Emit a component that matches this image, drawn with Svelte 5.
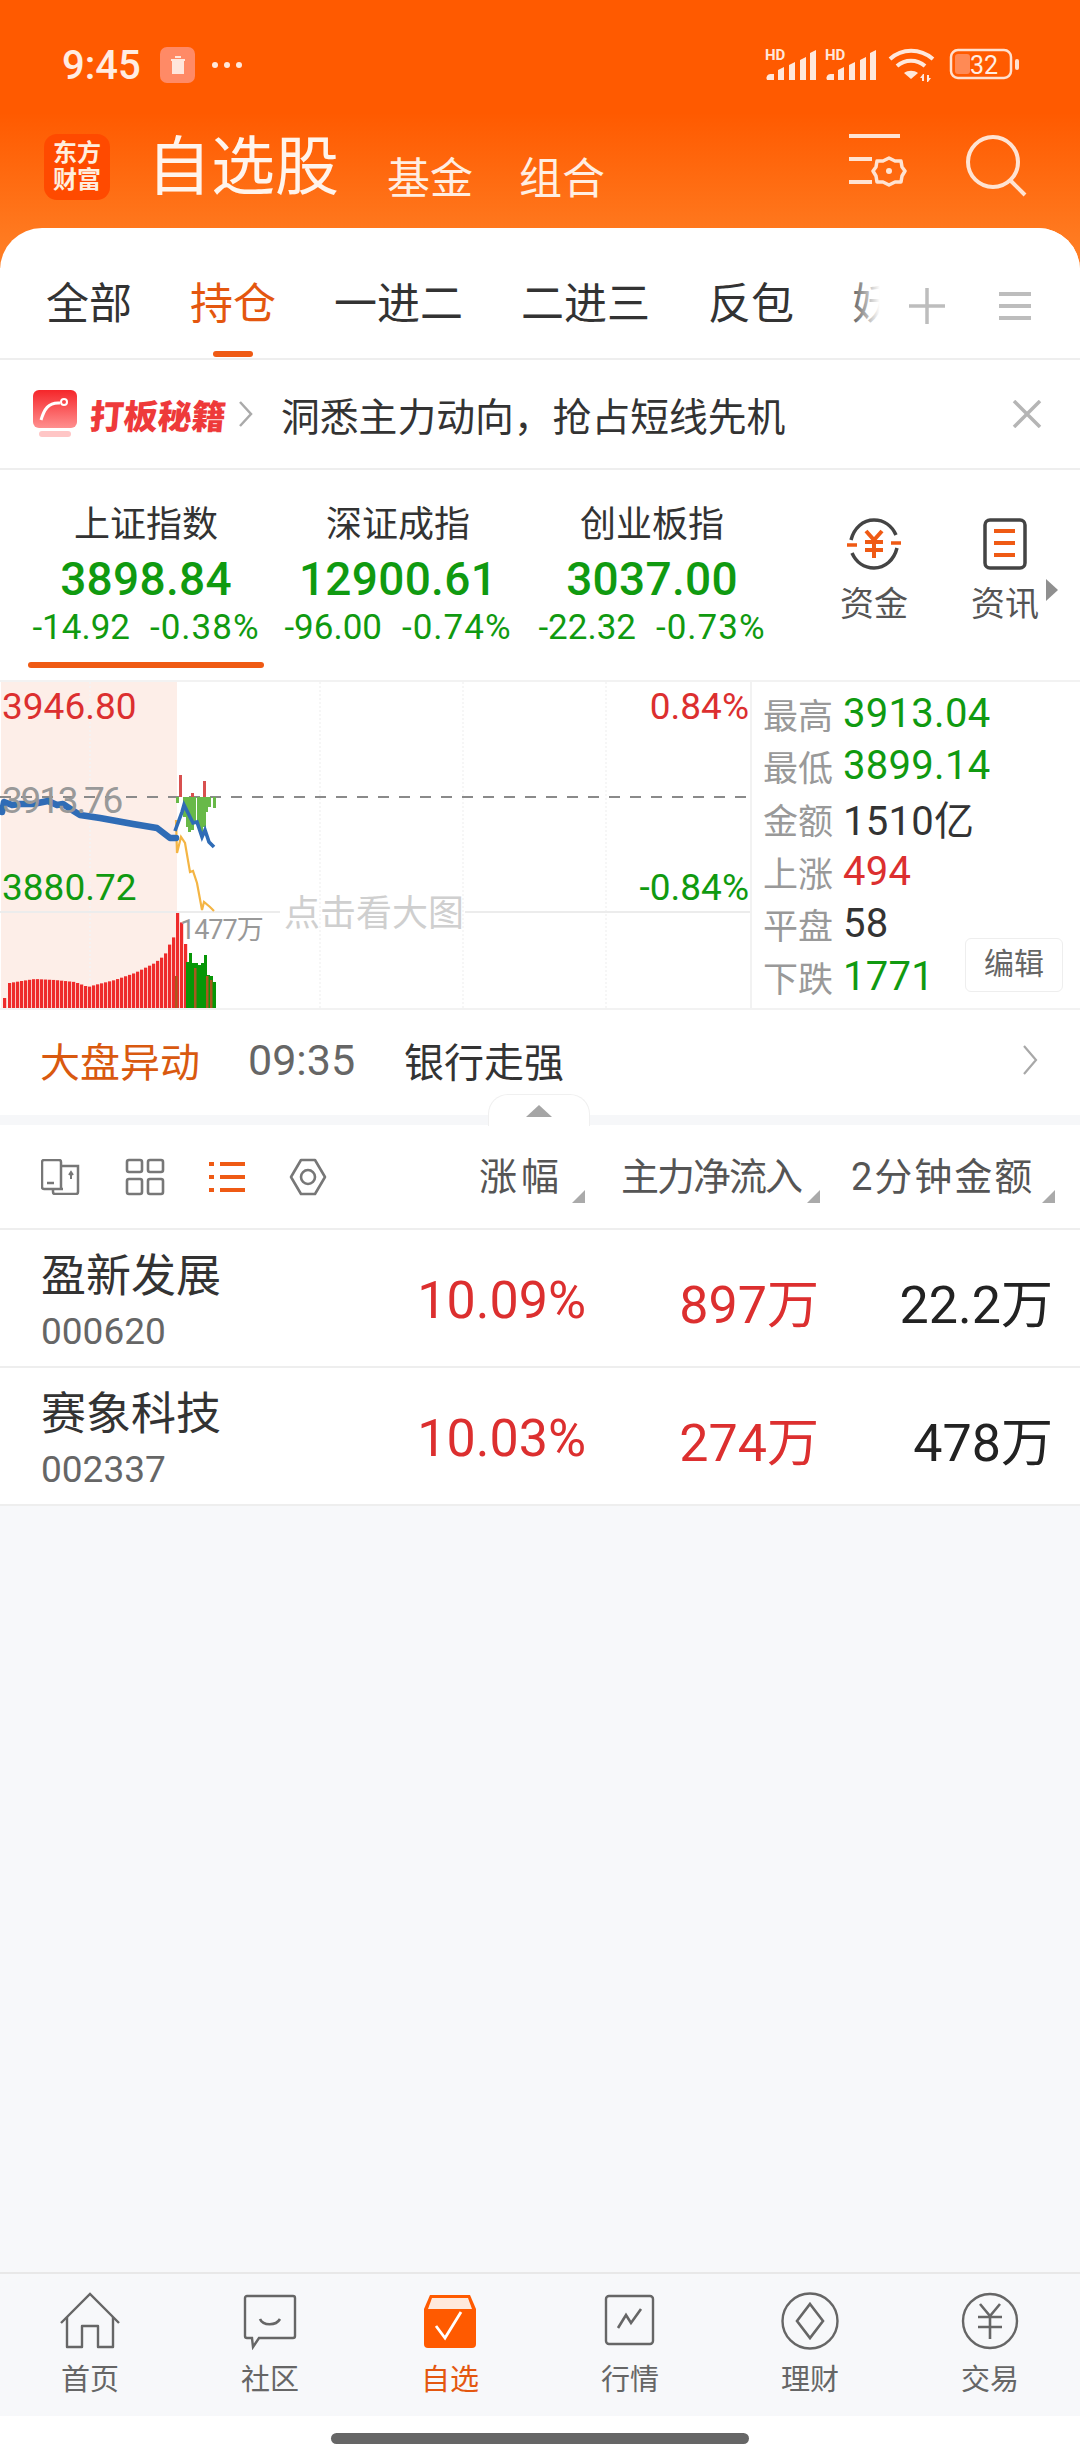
<script>
  const tabs = ['全部', '持仓', '一进二', '二进三', '反包', '妖股'];
  const indexes = [
    { name: '上证指数', value: '3898.84', change: '-14.92', pct: '-0.38%', active: true },
    { name: '深证成指', value: '12900.61', change: '-96.00', pct: '-0.74%' },
    { name: '创业板指', value: '3037.00', change: '-22.32', pct: '-0.73%' }
  ];
  const stats = [
    { label: '最高', value: '3913.04', tone: 'green' },
    { label: '最低', value: '3899.14', tone: 'green' },
    { label: '金额', value: '1510亿', tone: 'dark' },
    { label: '上涨', value: '494', tone: 'red' },
    { label: '平盘', value: '58', tone: 'dark' },
    { label: '下跌', value: '1771', tone: 'green' }
  ];
  const stocks = [
    { name: '盈新发展', code: '000620', pct: '10.09%', flow: '897万', amount: '22.2万' },
    { name: '赛象科技', code: '002337', pct: '10.03%', flow: '274万', amount: '478万' }
  ];
  const navs = ['首页', '社区', '自选', '行情', '理财', '交易'];

  // volume tops, [x, y] in chart space
  const volTop = [[8, 303], [24, 303], [60, 301], [100, 299], [160, 300], [220, 302], [260, 307], [280, 305], [340, 300], [400, 293], [460, 283], [490, 275], [500, 267], [520, 255], [528, 240], [534, 233], [548, 255], [556, 273]];
  function topAt(zx) {
    for (let i = 1; i < volTop.length; i++) {
      const [x0, y0] = volTop[i - 1];
      const [x1, y1] = volTop[i];
      if (zx <= x1) return y0 + ((y1 - y0) * (zx - x0)) / (x1 - x0);
    }
    return 300;
  }
  const redBars = [{ x: 3, y: 318 }];
  for (let x = 8; x < 185; x += 4) {
    redBars.push({ x, y: x === 176 ? 233 : topAt(x * 3) });
  }
  const greenVol = [[186, 282], [189, 273], [192, 283], [195, 283], [198, 285], [201, 283], [204, 275], [207, 295], [210, 296], [213, 302]];
  const brownVol = [[175, 296], [194, 288], [206, 296], [210, 300]];
  const flowDown = [[176, 6], [183, 20], [186, 30], [188, 35], [191, 33], [193, 25], [197, 30], [200, 35], [203, 30], [205, 15], [208, 10], [213, 11]];
</script>

<div class="page">
  <header class="top">
    <div class="status">
      <span class="time">9:45</span>
      <span class="trash">
        <svg width="20" height="22" viewBox="0 0 20 22"><path d="M3 5h14v2H16v13H4V7H3zM7 2h6v2H7z" fill="#ffe6dc"/></svg>
      </span>
      <span class="dots"><i></i><i></i><i></i></span>
      <span class="grow"></span>
      <svg class="sb" width="258" height="44" viewBox="0 -4 258 44">
        {#each [0, 60] as dx}
          <g transform="translate({dx} 0)" fill="#ffe8dc">
            <text x="0" y="12" font-size="15" font-weight="700" font-family="Roboto, sans-serif">HD</text>
            <path d="M2 32a4 4 0 0 1 4-6h3v6z"/>
            <path d="M13 32v-10l6-3v13zM24 32V17l6-3v18zM35 32V12l6-3v23zM45 32V5l6-3v30z"/>
          </g>
        {/each}
        <g fill="none" stroke="#ffe8dc" stroke-width="4">
          <path d="M125 11c12-11 30-11 43 0"/>
          <path d="M132 18c8-7 20-7 28 0"/>
        </g>
        <path d="M139 25c4-3 10-3 14 0l-7 6z" fill="#ffe8dc"/>
        <path d="M158 26l-3 4h2v3h2v-7zM163 34l3-4h-2v-3h-2v7z" fill="#ffe8dc"/>
        <rect x="186" y="2" width="60" height="28" rx="7" fill="none" stroke="#ffe0cf" stroke-width="2.5"/>
        <rect x="190" y="6" width="15" height="20" rx="3" fill="#ff8a55"/>
        <rect x="250" y="11" width="4" height="11" rx="2" fill="#ffe0cf"/>
        <text x="205" y="26" font-size="25" fill="#ffeee4" font-family="Roboto, sans-serif">32</text>
      </svg>
    </div>
    <div class="title-row">
      <div class="logo"><span>东方</span><span>财富</span></div>
      <span class="title">自选股</span>
      <span class="sub first">基金</span>
      <span class="sub second">组合</span>
      <span class="grow"></span>
      <svg class="cfg" width="60" height="68" viewBox="0 0 60 68" fill="none" stroke="#ffe3d2" stroke-width="4">
        <path d="M2 8h51M2 31h23M2 54h23"/>
        <path d="M42 30l6 3 6 0 1 6 3 4-3 5-1 6-6 0-6 3-6-3-6 0-1-6-3-5 3-4 1-6 6 0z" stroke-width="3.5" stroke-linejoin="round"/>
        <circle cx="42" cy="43" r="3" fill="#ffe3d2" stroke="none"/>
      </svg>
      <svg class="search" width="62" height="64" viewBox="0 0 62 64" fill="none" stroke="#ffe3d2" stroke-width="4">
        <circle cx="27" cy="28" r="25"/>
        <path d="M45 47l14 14"/>
      </svg>
    </div>
  </header>

  <section class="card">
    <nav class="tabs">
      {#each tabs as tab, i}
        <span class="tab" class:on={i === 1}>{tab}</span>
      {/each}
      <div class="tab-tools">
        <svg width="38" height="38" viewBox="0 0 38 38"><path d="M19 1v36M1 19h36" stroke="#bdbdbd" stroke-width="3.5"/></svg>
        <svg width="34" height="32" viewBox="0 0 34 32"><path d="M1 4h32M1 16h32M1 28h32" stroke="#bdbdbd" stroke-width="4"/></svg>
      </div>
    </nav>

    <div class="banner">
      <svg width="46" height="48" viewBox="0 0 46 48">
        <defs>
          <linearGradient id="bn" x1="0" y1="0" x2="0" y2="1">
            <stop offset="0" stop-color="#f5262a"/>
            <stop offset="1" stop-color="#ff8f8f"/>
          </linearGradient>
        </defs>
        <rect x="1" width="44" height="38" rx="6" fill="url(#bn)"/>
        <path d="M9 30c3-10 7-18 19-17" fill="none" stroke="#fff" stroke-width="3"/>
        <circle cx="32" cy="12" r="3" fill="none" stroke="#fff" stroke-width="2"/>
        <rect x="7" y="41" width="32" height="6" rx="3" fill="#ffc6c6"/>
      </svg>
      <span class="brand">打板秘籍</span>
      <svg width="15" height="28" viewBox="0 0 15 28"><path d="M2 2l11 12L2 26" fill="none" stroke="#aaa" stroke-width="2.5"/></svg>
      <span class="slogan">洞悉主力动向，抢占短线先机</span>
      <span class="grow"></span>
      <svg class="close" width="30" height="28" viewBox="0 0 30 28"><path d="M2 1l26 26M28 1L2 27" stroke="#b5b5b5" stroke-width="3.5"/></svg>
    </div>

    <div class="indexes">
      {#each indexes as item}
        <div class="idx">
          <div class="idx-name">{item.name}</div>
          <div class="idx-val">{item.value}</div>
          <div class="idx-chg"><span>{item.change}</span><span class="pct">{item.pct}</span></div>
          {#if item.active}<div class="idx-line"></div>{/if}
        </div>
      {/each}
      <div class="side">
        <div class="side-item">
          <svg width="56" height="56" viewBox="0 0 56 56" fill="none">
            <path d="M5 24C8 12 17 4 28 4c10 0 18 6 22 15M51 32c-3 12-12 20-23 20-10 0-18-6-22-15" stroke="#444" stroke-width="3.5"/>
            <path d="M1 29l10 0M45 27l10 0" stroke="#ef5a14" stroke-width="3.5"/>
            <path d="M20 15l8 9 8-9M19 26h18M19 34h18M28 24v18" stroke="#ef5a14" stroke-width="4"/>
          </svg>
          <span>资金</span>
        </div>
        <div class="side-item">
          <svg width="46" height="52" viewBox="0 0 46 52" fill="none">
            <rect x="3" y="2" width="40" height="48" rx="5" stroke="#444" stroke-width="3.5"/>
            <path d="M12 13h21M12 25h21M12 37h21" stroke="#ef5a14" stroke-width="4"/>
          </svg>
          <span>资讯</span>
        </div>
        <svg class="more" width="14" height="24" viewBox="0 0 14 24"><path d="M1 1l12 11L1 23z" fill="#8f8f8f"/></svg>
      </div>
    </div>

    <div class="market">
      <div class="chart">
        <svg class="plot" width="750" height="326" viewBox="0 2 750 326">
          <rect x="1" y="2" width="176" height="326" fill="#fdeee8"/>
          {#each [90, 320, 463, 606] as x}
            <line x1={x} x2={x} y1="2" y2="328" stroke="#f3f3f3" stroke-width="1.5" stroke-dasharray="2 2"/>
          {/each}
          <line x1="0" x2="280" y1="232" y2="232" stroke="#ececec" stroke-width="2"/>
          <line x1="465" x2="750" y1="232" y2="232" stroke="#ececec" stroke-width="2"/>
          {#each redBars as b}
            <rect x={b.x} y={b.y} width="3.2" height={328 - b.y} fill="#ee2b2b"/>
          {/each}
          {#each greenVol as [x, y]}
            <rect x={x} y={y} width="3" height={328 - y} fill="#079607"/>
          {/each}
          {#each brownVol as [x, y]}
            <rect x={x} y={y} width="2.5" height={328 - y} fill="#a9581f"/>
          {/each}
          <line x1="0" x2="750" y1="117" y2="117" stroke="#8a8a8a" stroke-width="2" stroke-dasharray="11 10"/>
          {#each flowDown as [x, d]}
            <rect x={x} y="117" width="3" height={d} fill="#68b948"/>
          {/each}
          <rect x="179" y="95" width="3" height="22" fill="#d8504f"/>
          <rect x="191" y="113" width="3" height="4" fill="#d8504f"/>
          <rect x="203" y="101" width="3" height="16" fill="#d8504f"/>
          <polyline points="176,140 177,173 181,157 185,163 190,192 193,191 197,203 202,230 204,222 210,227 214,231" fill="none" stroke="#f4b544" stroke-width="2.2"/>
          <polyline points="2,132 4,122 12,125 20,124 33,124 48,121 57,125 63,124 72,130 80,135 100,138 133,144 157,148 170,158 176,158" fill="none" stroke="#2f6cb6" stroke-width="6.5" stroke-linejoin="round" stroke-linecap="round"/>
          <polyline points="175,151 182,132 184,125 193,143 197,142 202,157 205,150 209,162 214,167" fill="none" stroke="#2f6cb6" stroke-width="3.6"/>
        </svg>
        <span class="lb red left t1">3946.80</span>
        <span class="lb gray left t2">3913.76</span>
        <span class="lb green left t3">3880.72</span>
        <span class="lb red right t1">0.84%</span>
        <span class="lb green right t3">-0.84%</span>
        <span class="vol">1477万</span>
        <span class="hint">点击看大图</span>
      </div>
      <div class="stats">
        {#each stats as s}
          <div class="stat"><span class="stat-k">{s.label}</span><span class="stat-v {s.tone}">{s.value}</span></div>
        {/each}
        <span class="edit">编辑</span>
      </div>
    </div>

    <div class="alert">
      <span class="alert-tag">大盘异动</span>
      <span class="alert-time">09:35</span>
      <span class="alert-text">银行走强</span>
      <span class="grow"></span>
      <svg width="16" height="32" viewBox="0 0 16 32"><path d="M2 2l12 14L2 30" fill="none" stroke="#a8a8a8" stroke-width="2.2"/></svg>
    </div>
  </section>

  <div class="strip">
    <div class="handle"><i></i></div>
  </div>

  <div class="tools">
    <svg width="40" height="36" viewBox="0 0 40 36" fill="none" stroke="#777" stroke-width="2.5">
      <path d="M22 30H3a2 2 0 0 1-2-2V3a2 2 0 0 1 2-2h15a2 2 0 0 1 2 2v27"/>
      <path d="M20 7h17v26a2 2 0 0 1-2 2H14a2 2 0 0 1-2-2v-3"/>
      <path d="M6 24h7"/>
      <path d="M30 14v6M28 16l2-3 2 3" stroke-width="2"/>
    </svg>
    <svg width="40" height="38" viewBox="0 0 40 38" fill="none" stroke="#777" stroke-width="2.6">
      <rect x="2" y="2" width="15" height="12" rx="2"/>
      <rect x="23" y="2" width="15" height="12" rx="2"/>
      <rect x="2" y="21" width="15" height="15" rx="2"/>
      <rect x="23" y="21" width="15" height="15" rx="2"/>
    </svg>
    <svg width="36" height="32" viewBox="0 0 36 32" stroke="#ef5a14" stroke-width="4">
      <path d="M0 3h5M0 16h5M0 29h5M11 3h25M11 16h25M11 29h25"/>
    </svg>
    <svg width="38" height="38" viewBox="0 0 38 38" fill="none" stroke="#777" stroke-width="2.6">
      <path d="M12 2h14l10 17-10 17H12L2 19z" stroke-linejoin="round"/>
      <circle cx="19" cy="19" r="7"/>
    </svg>
    <div class="cols">
      <span class="col c1">涨幅<i></i></span>
      <span class="col c2">主力净流入<i></i></span>
      <span class="col c3">2分钟金额<i></i></span>
    </div>
  </div>

  {#each stocks as s}
    <div class="row">
      <div class="stock">
        <div class="stock-name">{s.name}</div>
        <div class="stock-code">{s.code}</div>
      </div>
      <span class="num red">{s.pct}</span>
      <span class="num red">{s.flow}</span>
      <span class="num ink">{s.amount}</span>
    </div>
  {/each}

  <div class="fill"></div>

  <footer class="nav">
    {#each navs as label, i}
      <div class="nav-item" class:on={i === 2}>
        <svg width="64" height="58" viewBox="0 0 64 58" fill="none" stroke="#666" stroke-width="2.4">
          {#if i === 0}
            <path d="M3 31L32 2l29 29"/>
            <path d="M9 25v30h15V34h16v21h15V25" stroke-linejoin="round"/>
          {:else if i === 1}
            <path d="M9 4h46a2 2 0 0 1 2 2v38a2 2 0 0 1-2 2H21l-6 9-1-9H9a2 2 0 0 1-2-2V6a2 2 0 0 1 2-2z"/>
            <path d="M22 27c3 7 16 7 20 0" stroke-width="2.6"/>
          {:else if i === 2}
            <path d="M12 3h40l6 14v35a4 4 0 0 1-4 4H10a4 4 0 0 1-4-4V17z" fill="#ff5a00" stroke="none"/>
            <path d="M14 6h36l4 11H10z" fill="#ffe9dc" stroke="none"/>
            <path d="M18 34l9 12 16-26" stroke="#fff" stroke-width="2.8"/>
          {:else if i === 3}
            <rect x="8" y="4" width="47" height="48" rx="3"/>
            <path d="M20 36l8-13 5 8 10-14" stroke-width="2.6"/>
          {:else if i === 4}
            <circle cx="32" cy="29" r="27.5"/>
            <path d="M32 12l13 17-13 17-13-17z" stroke-width="2.6"/>
          {:else}
            <circle cx="32" cy="29" r="27"/>
            <path d="M22 12l10 12 10-12M20 25h24M20 35h24M32 24v23" stroke-width="2.6"/>
          {/if}
        </svg>
        <span>{label}</span>
      </div>
    {/each}
  </footer>
  <div class="home"><i></i></div>
</div>

<style>
  :global(body) {
    margin: 0;
    background: #f7f8fa;
  }
  .page {
    width: 1080px;
    height: 2460px;
    display: flex;
    flex-direction: column;
    overflow: hidden;
    font-family: Roboto, "Noto Sans CJK SC", sans-serif;
    color: #333;
    background: #f7f8fa;
  }
  .grow {
    flex: 1;
  }
  .top {
    height: 268px;
    flex: none;
    background: linear-gradient(#ff5a00 0, #ff5a00 42%, #ff7c22 92%);
    color: #fff;
  }
  .status {
    height: 130px;
    box-sizing: border-box;
    padding: 0 55px 0 62px;
    display: flex;
    align-items: center;
  }
  .time {
    font-size: 40px;
    font-weight: 500;
    color: #ffece2;
    width: 98px;
  }
  .trash {
    width: 35px;
    height: 36px;
    border-radius: 7px;
    background: #ff8a66;
    display: flex;
    align-items: center;
    justify-content: center;
  }
  .dots {
    display: flex;
    gap: 6px;
    margin-left: 17px;
  }
  .dots i {
    width: 6px;
    height: 6px;
    border-radius: 50%;
    background: #ffe8dc;
  }
  .sb {
    margin-right: 2px;
    margin-top: 2px;
  }
  .title-row {
    height: 72px;
    padding: 0 52px 0 44px;
    display: flex;
    align-items: flex-end;
  }
  .logo {
    width: 66px;
    height: 66px;
    margin-bottom: 2px;
    border-radius: 13px;
    background: #ff4a00;
    font-size: 24px;
    line-height: 27px;
    font-weight: 700;
    color: #ffeede;
    display: flex;
    flex-direction: column;
    align-items: center;
    justify-content: center;
  }
  .title {
    font-size: 64px;
    line-height: 76px;
    margin-left: 37px;
    margin-bottom: -4px;
    color: #fff4ec;
  }
  .sub {
    font-size: 43px;
    line-height: 60px;
    margin-left: 46px;
    margin-bottom: -7px;
    color: #ffeee2;
  }
  .sub.first {
    margin-left: 48px;
  }
  .cfg {
    margin-bottom: 6px;
  }
  .search {
    margin-left: 59px;
    margin-bottom: 4px;
  }
  .card {
    margin-top: -40px;
    background: #fff;
    border-radius: 42px 42px 0 0;
    flex: none;
  }
  .tabs {
    height: 132px;
    box-sizing: border-box;
    border-bottom: 2px solid #eee;
    border-radius: 42px 42px 0 0;
    padding-left: 46px;
    display: flex;
    align-items: center;
    gap: 58px;
    position: relative;
    overflow: hidden;
    white-space: nowrap;
    font-size: 43px;
    padding-top: 22px;
  }
  .tab {
    flex: none;
    position: relative;
    line-height: 56px;
  }
  .tab.on {
    color: #e4570f;
  }
  .tab.on::after {
    content: "";
    position: absolute;
    left: 23px;
    bottom: -25px;
    width: 40px;
    height: 6px;
    border-radius: 3px;
    background: #ef5a14;
  }
  .tab-tools {
    position: absolute;
    top: 0;
    right: 0;
    bottom: 0;
    width: 230px;
    padding: 26px 48px 0 0;
    box-sizing: border-box;
    display: flex;
    align-items: center;
    justify-content: flex-end;
    gap: 52px;
    background: linear-gradient(90deg, rgba(255, 255, 255, 0.15) 0, #fff 13%);
  }
  .banner {
    height: 110px;
    box-sizing: border-box;
    border-bottom: 2px solid #eee;
    padding: 0 38px 0 32px;
    display: flex;
    align-items: center;
  }
  .brand {
    margin-left: 12px;
    font-size: 34px;
    font-weight: 900;
    color: #ee3a3a;
    margin-right: 12px;
    transform: skewX(-5deg);
  }
  .slogan {
    margin-left: 28px;
    font-size: 38.8px;
    color: #333;
  }
  .indexes {
    height: 210px;
    padding-left: 20px;
    display: flex;
    position: relative;
  }
  .idx {
    width: 252px;
    flex: none;
    text-align: center;
    padding-top: 30px;
    position: relative;
  }
  .idx:nth-child(3) {
    width: 256px;
  }
  .idx-name {
    font-size: 36px;
    line-height: 50px;
    color: #333;
  }
  .idx-val {
    font-size: 46px;
    font-weight: 500;
    line-height: 54px;
    margin-top: 2px;
    color: #109a10;
    letter-spacing: 0.3px;
  }
  .idx-chg {
    font-size: 35px;
    line-height: 44px;
    color: #109a10;
    display: flex;
    justify-content: center;
    gap: 20px;
  }
  .pct {
    letter-spacing: 1px;
  }
  .idx-line {
    position: absolute;
    left: 8px;
    right: 8px;
    bottom: 12px;
    height: 6px;
    border-radius: 3px;
    background: #ef5a14;
  }
  .side {
    margin-left: 60px;
    display: flex;
    gap: 63px;
    padding-top: 46px;
  }
  .side-item {
    width: 68px;
    display: flex;
    flex-direction: column;
    align-items: center;
    font-size: 34px;
    line-height: 44px;
    color: #555;
    gap: 10px;
  }
  .side-item svg {
    height: 56px;
  }
  .more {
    position: absolute;
    right: 21px;
    top: 108px;
  }
  .market {
    height: 330px;
    box-sizing: border-box;
    border-top: 2px solid #f2f2f2;
    border-bottom: 2px solid #f2f2f2;
    display: flex;
  }
  .chart {
    width: 750px;
    flex: none;
    position: relative;
    border-right: 2px solid #f2f2f2;
  }
  .plot {
    display: block;
  }
  .lb {
    position: absolute;
    font-size: 37px;
    line-height: 44px;
  }
  .lb.left {
    left: 2px;
  }
  .lb.right {
    right: 1px;
  }
  .t1 {
    top: 3px;
  }
  .t2 {
    top: 97px;
    letter-spacing: -2.2px;
  }
  .t3 {
    top: 184px;
  }
  .red {
    color: #dc2f2f;
  }
  .green {
    color: #109a10;
  }
  .gray {
    color: #999;
  }
  .dark {
    color: #333;
  }
  .ink {
    color: #222;
  }
  .vol {
    position: absolute;
    left: 180px;
    top: 230px;
    font-size: 27px;
    line-height: 36px;
    color: #999;
    letter-spacing: -1px;
  }
  .hint {
    position: absolute;
    left: 284px;
    top: 208px;
    font-size: 36px;
    line-height: 48px;
    color: #cfcfcf;
  }
  .stats {
    flex: 1;
    position: relative;
    padding: 5px 0 0 11px;
  }
  .stat {
    height: 52.6px;
    display: flex;
    align-items: center;
  }
  .stat-k {
    width: 80px;
    font-size: 35px;
    color: #999;
    flex: none;
  }
  .stat-v {
    font-size: 40px;
    letter-spacing: 0.3px;
  }
  .edit {
    position: absolute;
    right: 17px;
    bottom: 16px;
    width: 98px;
    height: 54px;
    box-sizing: border-box;
    border: 1.5px solid #eee;
    border-radius: 6px;
    font-size: 30px;
    line-height: 50px;
    text-align: center;
    color: #666;
  }
  .alert {
    height: 105px;
    box-sizing: border-box;
    padding: 0 42px 5px 40px;
    display: flex;
    align-items: center;
    font-size: 40px;
  }
  .alert-tag {
    color: #d9590f;
  }
  .alert-time {
    margin-left: 48px;
    font-size: 43px;
    color: #666;
    width: 156px;
  }
  .alert-text {
    color: #333;
  }
  .strip {
    height: 10px;
    flex: none;
    background: #f6f7f9;
    position: relative;
  }
  .handle {
    position: absolute;
    left: 488px;
    bottom: -1px;
    width: 102px;
    height: 32px;
    box-sizing: border-box;
    background: #fff;
    border: 1.5px solid #f0f0f0;
    border-bottom: 0;
    border-radius: 20px 20px 0 0;
  }
  .handle i {
    position: absolute;
    left: 37px;
    top: 10px;
    border-left: 13px solid transparent;
    border-right: 13px solid transparent;
    border-bottom: 12px solid #a5a5a5;
  }
  .tools {
    height: 105px;
    flex: none;
    box-sizing: border-box;
    background: #fff;
    border-bottom: 2px solid #eee;
    padding: 0 25px 0 41px;
    display: flex;
    align-items: center;
    gap: 44px;
  }
  .cols {
    margin-left: auto;
    display: flex;
    align-items: center;
  }
  .col {
    position: relative;
    flex: none;
    box-sizing: border-box;
    font-size: 38px;
    line-height: 52px;
    color: #555;
    padding-right: 22px;
    text-align: right;
    white-space: nowrap;
  }
  .col i {
    position: absolute;
    right: 0;
    bottom: 0;
    border-left: 13px solid transparent;
    border-bottom: 13px solid #aaa;
  }
  .c1 {
    width: 107px;
    letter-spacing: 4px;
  }
  .c2 {
    width: 199px;
    margin-left: 36px;
    letter-spacing: -2px;
  }
  .c3 {
    width: 204px;
    margin-left: 31px;
    letter-spacing: 2px;
  }
  .row {
    height: 138px;
    flex: none;
    box-sizing: border-box;
    background: #fff;
    border-bottom: 2px solid #eee;
    padding: 0 27px 0 41px;
    display: grid;
    grid-template-columns: 1fr 220px 233px 234px;
    align-items: center;
  }
  .stock {
    padding-top: 6px;
  }
  .stock-name {
    font-size: 45px;
    line-height: 56px;
    color: #333;
  }
  .stock-code {
    font-size: 37px;
    line-height: 44px;
    margin-top: 5px;
    color: #666;
  }
  .num {
    text-align: right;
    font-size: 52px;
    padding-top: 4px;
  }
  .fill {
    flex: 1;
    border-bottom: 2px solid #e8e8e8;
  }
  .nav {
    height: 142px;
    flex: none;
    box-sizing: border-box;
    background: #f7f8fa;
    display: grid;
    grid-template-columns: repeat(6, 180px);
    padding-top: 18px;
  }
  .nav-item {
    display: flex;
    flex-direction: column;
    align-items: center;
    font-size: 29px;
    line-height: 40px;
    color: #666;
    gap: 10px;
  }
  .nav-item.on {
    color: #e4570f;
  }
  .home {
    height: 44px;
    flex: none;
    background: #fff;
    display: flex;
    justify-content: center;
    padding-top: 17px;
    box-sizing: border-box;
  }
  .home i {
    width: 418px;
    height: 11px;
    border-radius: 6px;
    background: #666;
  }
</style>
